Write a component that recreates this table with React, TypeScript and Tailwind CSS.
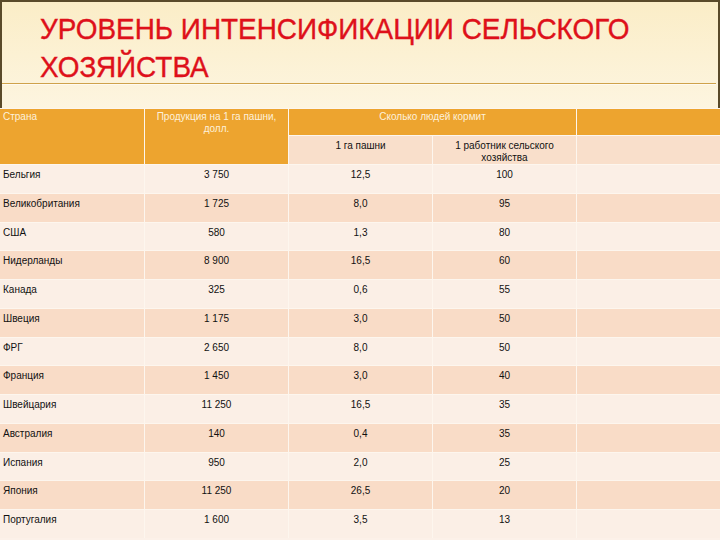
import React from "react";

const rows: [string, string, string, string][] = [
  ["Бельгия", "3 750", "12,5", "100"],
  ["Великобритания", "1 725", "8,0", "95"],
  ["США", "580", "1,3", "80"],
  ["Нидерланды", "8 900", "16,5", "60"],
  ["Канада", "325", "0,6", "55"],
  ["Швеция", "1 175", "3,0", "50"],
  ["ФРГ", "2 650", "8,0", "50"],
  ["Франция", "1 450", "3,0", "40"],
  ["Швейцария", "11 250", "16,5", "35"],
  ["Австралия", "140", "0,4", "35"],
  ["Испания", "950", "2,0", "25"],
  ["Япония", "11 250", "26,5", "20"],
  ["Португалия", "1 600", "3,5", "13"],
];

export default function App() {
  return (
    <div
      className="w-[720px] h-[540px] overflow-hidden bg-[#fcf1e9] flex flex-col"
      style={{ fontFamily: '"Liberation Sans", Arial, sans-serif' }}
    >
      <div className="h-[108px] shrink-0 flex flex-col border-t-2 border-l-2 border-r-2 border-[#5a4a2a] bg-gradient-to-b from-[#fbedc7] to-[#fdf5e0]">
        <div className="h-[81px] pt-[8px] pl-[38px]">
          <h1 className="w-[700px] origin-left scale-x-[0.93] text-[30px] leading-[38px] text-[#de101a] font-normal [-webkit-text-stroke:0.4px_#de101a]">
            УРОВЕНЬ ИНТЕНСИФИКАЦИИ СЕЛЬСКОГО
            <br />
            ХОЗЯЙСТВА
          </h1>
        </div>
        <div className="h-px mr-[2px] bg-[#cfa24a]" />
        <div className="h-px mr-[2px] bg-[#fffaf0]" />
      </div>

      <div className="grid grid-cols-[144px_143px_143px_143px_143px] gap-px bg-[#fdf6ee] pt-px grid-rows-[26px_28px] shrink-0 text-[10px] leading-[12px]">
        <div className="row-span-2 bg-[#eda42f] text-[#fdf1dc] pl-[3px] pt-[2px]">Страна</div>
        <div className="row-span-2 bg-[#eda42f] text-[#fdf1dc] text-center pt-[2px] px-2">
          Продукция на 1 га пашни,
          <br />
          долл.
        </div>
        <div className="col-span-2 bg-[#eda42f] text-[#fdf1dc] text-center pt-[2px]">Сколько людей кормит</div>
        <div className="bg-[#eda42f]" />
        <div className="bg-[#f9dfcb] text-[#111] text-center pt-[4px]">1 га пашни</div>
        <div className="bg-[#f9dfcb] text-[#111] text-center pt-[4px]">
          1 работник сельского
          <br />
          хозяйства
        </div>
        <div className="bg-[#f9dfcb]" />
      </div>

      <div className="grid grid-cols-[144px_143px_143px_143px_143px] gap-px bg-[#fdf6ee] pt-px text-[10px] leading-[12px] text-[#111]">
        {rows.map((r, i) => {
          const bg = i % 2 === 0 ? "bg-[#fbefe6]" : "bg-[#f9dcc7]";
          return (
            <React.Fragment key={r[0]}>
              <div className={`${bg} h-[27.75px] pl-[3px] pt-[4px]`}>{r[0]}</div>
              <div className={`${bg} h-[27.75px] text-center pt-[4px]`}>{r[1]}</div>
              <div className={`${bg} h-[27.75px] text-center pt-[4px]`}>{r[2]}</div>
              <div className={`${bg} h-[27.75px] text-center pt-[4px]`}>{r[3]}</div>
              <div className={`${bg} h-[27.75px]`} />
            </React.Fragment>
          );
        })}
      </div>
    </div>
  );
}
